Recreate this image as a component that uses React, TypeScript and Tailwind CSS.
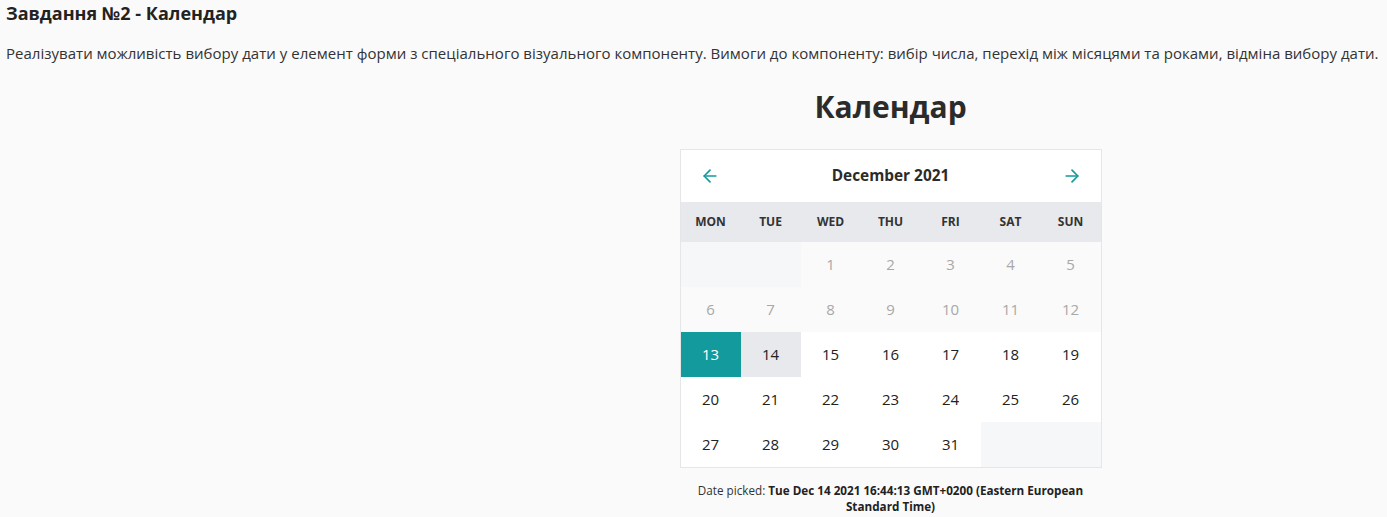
import { ArrowLeft, ArrowRight } from 'lucide-react';

const weekdays = ['MON', 'TUE', 'WED', 'THU', 'FRI', 'SAT', 'SUN'];

type Cell = { day: number | null };

function buildCells(): Cell[] {
  const cells: Cell[] = [{ day: null }, { day: null }];
  for (let d = 1; d <= 31; d++) cells.push({ day: d });
  while (cells.length < 35) cells.push({ day: null });
  return cells;
}

function DayCell({ c }: { c: Cell }) {
  if (c.day === null) return <div className="h-[45px] bg-[#f6f7f9]" />;
  const past = c.day < 13;
  const selected = c.day === 13;
  const today = c.day === 14;
  let cls = 'bg-white text-[#222]';
  if (past) cls = 'bg-[#fafafa] text-[#a8a8a8]';
  if (selected) cls = 'bg-[#129a9d] text-white';
  if (today) cls = 'bg-[#e8e9ed] text-[#222]';
  return (
    <div className={`flex h-[45px] items-center justify-center text-[15px] ${cls}`}>{c.day}</div>
  );
}

export default function App() {
  const cells = buildCells();
  return (
    <div
      className="min-h-[517px] bg-[#fafafa] text-[#212529]"
      style={{ fontFamily: '"Open Sans", "Noto Sans", sans-serif' }}
    >
      <div className="pl-[6px] pt-[1px]">
        <h2 className="text-[18px] font-bold leading-[24px] text-[#222]">Завдання №2 - Календар</h2>
        <p className="mt-[17px] whitespace-nowrap text-[15px] leading-[22px] tracking-[0.02px] text-[#333]">
          Реалізувати можливість вибору дати у елемент форми з спеціального візуального компоненту. Вимоги до
          компоненту: вибір числа, перехід між місяцями та роками, відміна вибору дати.
        </p>
      </div>

      <div className="flex flex-col items-center pl-[394px]">
        <h1 className="mt-[21px] text-[30px] font-bold leading-[44px] text-[#2b2b2b]">Календар</h1>

        <div className="mt-[20px] w-[422px] border border-[#e6e6e8] bg-white">
          <div className="flex h-[52px] items-center justify-between px-[19px]">
            <ArrowLeft size={20} strokeWidth={2} className="text-[#129a9d]" />
            <span className="text-[15.4px] font-bold text-[#2b2b2b]">December 2021</span>
            <ArrowRight size={20} strokeWidth={2} className="text-[#129a9d]" />
          </div>
          <div className="grid h-[40px] grid-cols-7 bg-[#e8e9ed]">
            {weekdays.map((w) => (
              <div key={w} className="flex items-center justify-center text-[12px] font-bold text-[#333]">
                {w}
              </div>
            ))}
          </div>
          <div className="grid grid-cols-7">
            {cells.map((c, i) => (
              <DayCell key={i} c={c} />
            ))}
          </div>
        </div>

        <p className="mt-[14px] w-[400px] text-center text-[11.7px] leading-[16px] text-[#333]">
          Date picked: <b className="text-[#222]">Tue Dec 14 2021 16:44:13 GMT+0200 (Eastern European Standard Time)</b>
        </p>
      </div>
    </div>
  );
}
